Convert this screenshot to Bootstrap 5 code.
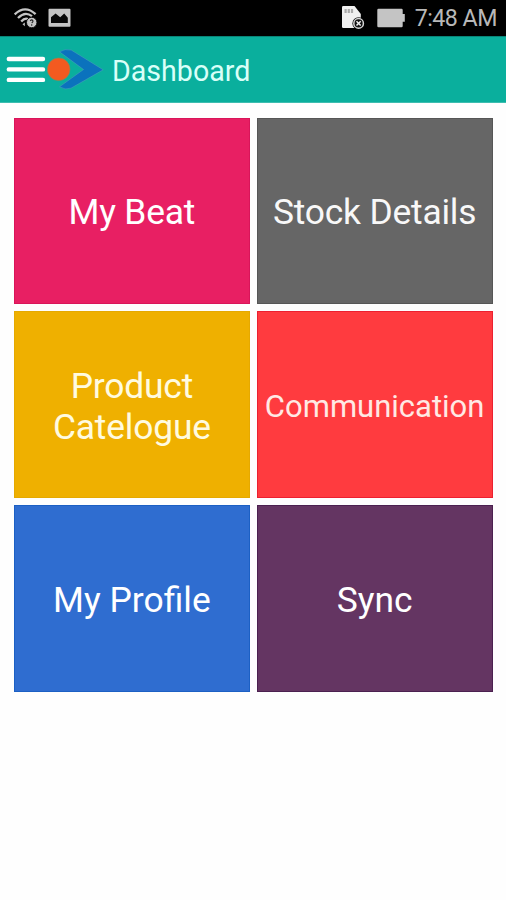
<!DOCTYPE html>
<html lang="en">
<head>
<meta charset="utf-8">
<meta name="viewport" content="width=device-width, initial-scale=1">
<title>Dashboard</title>
<link rel="stylesheet" href="https://cdn.jsdelivr.net/npm/bootstrap@5.3.0/dist/css/bootstrap.min.css">
<style>
body{font-family:Roboto,"Noto Sans",sans-serif;background:#fefefe}
svg{display:block;flex:none}
.status-bar{height:36px;background:#000;color:#b8b8b8;padding:0 9px 0 14px}
.clock{font-size:23.2px;line-height:36px;letter-spacing:-.5px}
.app-bar{height:67px;background:#0aaf9d;border-top:1px solid #0a8578;border-bottom:1px solid #3dbdb0;padding:0 0 1px 6px}
.app-title{font-size:28.6px;line-height:34px;letter-spacing:0;color:#d9fff8;margin:4px 0 0 8px}
.tiles{display:grid;grid-template-columns:1fr 1fr;grid-auto-rows:186.5px;gap:7.4px 7px;padding:14.5px 13.5px 0 14px}
.tile{border-radius:0;border:0;padding:4px 0 0;color:#fff;font-size:35.4px;line-height:41px;letter-spacing:-.2px;font-weight:400}
.tile:hover{color:#fff}
.beat{background:#e81f63;box-shadow:inset 0 0 0 1px #d9155a}
.stock{background:#666;box-shadow:inset 0 0 0 1px #565656;color:#f8f8f8}
.catalogue{background:#efb000;color:#fffbe0;box-shadow:inset 0 0 0 1px #e5a900}
.comm{background:#ff3b3f;font-size:31px;color:#ffe9e4;letter-spacing:0;box-shadow:inset 0 0 0 1px #ec2030}
.profile{background:#2f6dd0;letter-spacing:0;box-shadow:inset 0 0 0 1px #1c60c4}
.sync{background:#643562;letter-spacing:0;box-shadow:inset 0 0 0 1px #4b2050}
</style>
</head>
<body>
<header>
  <div class="status-bar d-flex align-items-center justify-content-between">
    <div class="d-flex align-items-center">
      <svg width="24" height="36" viewBox="14 0 24 36" fill="none" stroke="#c4c4c4" stroke-width="2.3">
        <path d="M14.7 14.4Q25 4.4 35.6 14.2"/><path d="M18 18Q25 10.8 32 16.2"/><path d="M21.2 21.6Q24.5 17.7 28 19"/>
        <path d="M22.5 24.2l2.3-1.6v3.7z" fill="#c4c4c4" stroke="none"/>
        <circle cx="31.7" cy="22.5" r="5.2" fill="#c4c4c4" stroke="#000" stroke-width=".8"/>
        <path d="M30.2 21Q31.8 18.8 33 21Q33.1 22.1 31.7 23M31.7 24.3v1.5" stroke="#222" stroke-width="1.1"/>
      </svg>
      <svg class="ms-2" width="26" height="36" viewBox="46 0 26 36">
        <rect x="48.5" y="8.7" width="22" height="18" rx="1" fill="#c4c4c4"/>
        <path d="M51 23V17.2L55.6 13.5L60.2 17.3L64.2 13.6L67.8 17.8V23Z" fill="#080808"/>
      </svg>
    </div>
    <div class="d-flex align-items-center">
      <svg width="74" height="36" viewBox="341 0 74 36">
        <path d="M342 7.2Q342 6 343.2 6H354.5L360.8 14V28H343.2Q342 28 342 26.8Z" fill="#f0f0f0"/>
        <path d="M344.5 9h2.2v4h-2.2zM347.7 9h2.2v4h-2.2zM350.9 9h2.2v4h-2.2z" fill="#aaa"/>
        <circle cx="358.6" cy="23.4" r="6.2" fill="#000"/>
        <circle cx="358.6" cy="23.4" r="4.8" fill="#111" stroke="#d6d6d6" stroke-width="1.5"/>
        <path d="M356.5 21.3l4.2 4.2M360.7 21.3l-4.2 4.2" stroke="#eee" stroke-width="1.5"/>
        <path d="M378.5 8.7H401.5Q402.7 8.7 402.7 10V14H404.8V21.7H402.7V26Q402.7 27.3 401.5 27.3H378.5Q377.3 27.3 377.3 26V10Q377.3 8.7 378.5 8.7Z" fill="#c4c4c4"/>
      </svg>
      <span class="clock">7:48 AM</span>
    </div>
  </div>
  <nav class="app-bar d-flex align-items-center">
    <svg width="98" height="66" viewBox="6 36 98 66" role="img" aria-label="Menu">
      <path d="M8.8 59H43M8.8 69.4H43M8.8 79.9H43" stroke="#fff" stroke-width="4.4" stroke-linecap="round"/>
      <path d="M59.5 51.8Q65 48.4 71.2 50L103.2 69.8L71 88.2Q65 90.4 59.5 86.8L83.5 69.5Z" fill="#0b72bd" stroke="#45a1b8" stroke-width=".6"/>
      <circle cx="58.7" cy="69.3" r="11.3" fill="#f35a20" stroke="#8a8a58" stroke-width=".6"/>
    </svg>
    <h1 class="app-title fw-normal">Dashboard</h1>
  </nav>
</header>
<main class="tiles">
  <button class="btn tile beat">My Beat</button>
  <button class="btn tile stock">Stock Details</button>
  <button class="btn tile catalogue">Product<br>Catelogue</button>
  <button class="btn tile comm">Communication</button>
  <button class="btn tile profile">My Profile</button>
  <button class="btn tile sync">Sync</button>
</main>
<script src="https://cdn.jsdelivr.net/npm/bootstrap@5.3.0/dist/js/bootstrap.bundle.min.js"></script>
</body>
</html>
